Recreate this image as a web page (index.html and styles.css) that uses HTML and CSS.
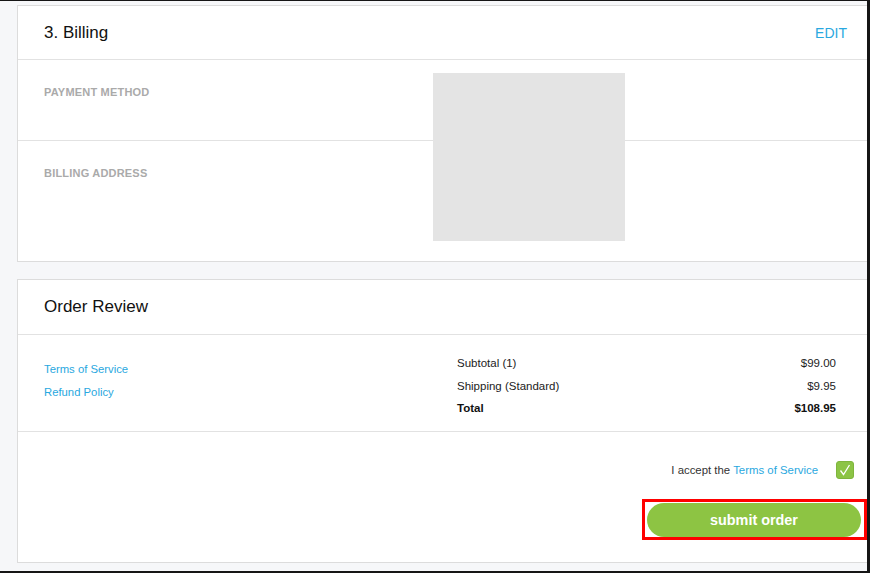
FILE: index.html
```html
<!DOCTYPE html>
<html lang="en">

<head>
    <meta charset="utf-8">
    <meta name="viewport" content="width=device-width, initial-scale=1.0">
    <title>Checkout</title>
    <link rel="stylesheet" href="styles.css">
</head>

<body>
    <div class="frame">

        <section class="card">
            <header class="card-head">
                <h2>3. Billing</h2>
                <a class="edit" href="#">EDIT</a>
            </header>
            <div class="billing">
                <div class="row row-payment">
                    <h3>PAYMENT METHOD</h3>
                </div>
                <div class="row row-address">
                    <h3>BILLING ADDRESS</h3>
                </div>
                <div class="placeholder"></div>
            </div>
        </section>

        <section class="card">
            <header class="card-head review-head">
                <h2>Order Review</h2>
            </header>
            <div class="review">
                <nav class="links">
                    <a href="#">Terms of Service</a>
                    <a href="#">Refund Policy</a>
                </nav>
                <table class="summary">
                    <tr>
                        <td>Subtotal (1)</td>
                        <td class="num">$99.00</td>
                    </tr>
                    <tr>
                        <td>Shipping (Standard)</td>
                        <td class="num">$9.95</td>
                    </tr>
                    <tr class="total">
                        <td>Total</td>
                        <td class="num">$108.95</td>
                    </tr>
                </table>
            </div>
            <div class="submit">
                <label class="accept">
                    <span>I accept the <a href="#">Terms of Service</a></span>
                    <span class="check">
                        <svg width="12" height="12" viewBox="0 0 12 12">
                            <polyline points="1.5,6.5 4.5,10.5 10.5,1" fill="none" stroke="#fff" stroke-width="1.3" />
                        </svg>
                    </span>
                </label>
                <div class="highlight">
                    <button class="btn">submit order</button>
                </div>
            </div>
        </section>

    </div>
</body>

</html>
```

FILE: styles.css
```css
body {
    margin: 0;
    padding: 0;
    font-family: "Liberation Sans", Arial, sans-serif;
    color: #222;
}

a {
    color: #29a8e0;
    text-decoration: none;
}

.frame {
    box-sizing: border-box;
    width: 870px;
    height: 573px;
    padding-top: 4px;
    background-color: #f6f7f9;
    border-top: 1px solid #151515;
    border-right: 3px solid #151515;
    border-bottom: 2px solid #151515;
    overflow: hidden;
}

/* cards run on past the right edge of the frame */
.card {
    box-sizing: border-box;
    width: 860px;
    margin-left: 17px;
    margin-bottom: 17px;
    background-color: white;
    border: 1px solid #dcdcdc;
}

.card-head {
    display: flex;
    align-items: center;
    justify-content: space-between;
    height: 53px;
    padding: 0 29px 0 26px;
    border-bottom: 1px solid #e2e2e2;
}

.review-head {
    height: 54px;
}

.card-head h2 {
    margin: 0;
    font-size: 17px;
    font-weight: normal;
    color: #111;
}

.edit {
    font-size: 14px;
}

.billing {
    position: relative;
}

.row {
    box-sizing: border-box;
    padding: 25px 26px 0;
}

.row-payment {
    height: 81px;
    border-bottom: 1px solid #e2e2e2;
}

.row-address {
    height: 120px;
}

.row h3 {
    margin: 0;
    font-size: 11px;
    line-height: 15px;
    letter-spacing: 0.2px;
    color: #aaa;
}

.placeholder {
    position: absolute;
    left: 415px;
    top: 13px;
    width: 192px;
    height: 168px;
    background-color: #e4e4e4;
}

.review {
    display: flex;
    justify-content: space-between;
    box-sizing: border-box;
    height: 97px;
    padding: 0 40px 0 26px;
    border-bottom: 1px solid #e2e2e2;
}

.links {
    display: flex;
    flex-direction: column;
    padding-top: 23px;
    font-size: 11.3px;
    line-height: 22.5px;
}

.summary {
    width: 379px;
    margin-top: 17px;
    align-self: flex-start;
    border-collapse: collapse;
    font-size: 11.5px;
    line-height: 22.5px;
    color: #222;
}

.summary td {
    padding: 0;
}

.summary .num {
    text-align: right;
}

.total {
    font-weight: bold;
    color: #111;
}

.submit {
    display: flex;
    flex-direction: column;
    align-items: flex-end;
    box-sizing: border-box;
    height: 130px;
    padding: 29px 9px 0 0;
}

.accept {
    display: flex;
    align-items: center;
    gap: 18px;
    margin-right: 13px;
    font-size: 11.4px;
    color: #333;
}

.check {
    display: flex;
    align-items: center;
    justify-content: center;
    box-sizing: border-box;
    width: 18px;
    height: 18px;
    background-color: #8cc445;
    border: 1px solid #7fb53c;
    border-radius: 3px;
}

.highlight {
    margin-top: 20px;
    padding: 1px 3px 0 2px;
    border: 3px solid #f00;
}

.btn {
    display: block;
    width: 214px;
    height: 34px;
    font-family: "Liberation Sans", Arial, sans-serif;
    font-size: 14.4px;
    font-weight: bold;
    color: white;
    background-color: #8dc443;
    border: none;
    border-radius: 17px;
}
```
